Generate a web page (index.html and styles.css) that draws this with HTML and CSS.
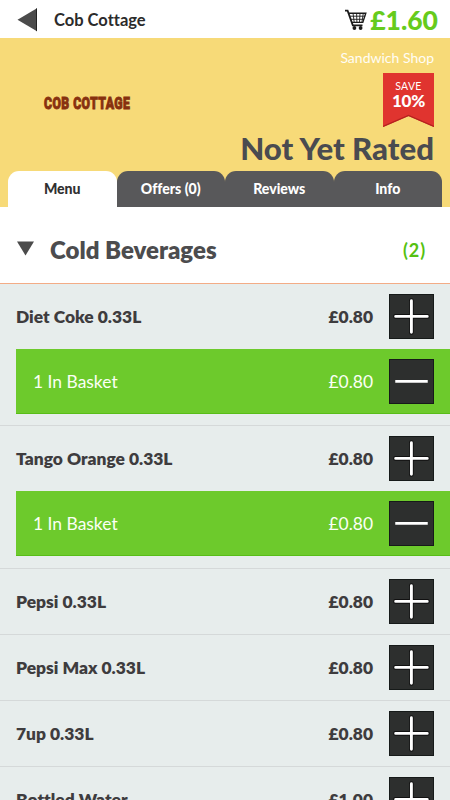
FILE: index.html
```html
<!DOCTYPE html>
<html lang="en">
<head>
<meta charset="utf-8">
<title>Cob Cottage</title>
<link rel="stylesheet" href="styles.css">
</head>
<body>
<svg class="defs" width="0" height="0" aria-hidden="true">
  <symbol id="plus" viewBox="0 0 45 45"><path d="M22.4 5.7v33.5M5.7 22.4h33.5" fill="none" stroke="#111" stroke-width="4.8" stroke-linecap="round"/><path d="M22.4 5.9v33.1M5.9 22.4h33.1" fill="none" stroke="#fff" stroke-width="3" stroke-linecap="round"/></symbol>
  <symbol id="minus" viewBox="0 0 45 45"><path d="M5.5 22.4h34" fill="none" stroke="#fff" stroke-width="3"/></symbol>
</svg>
<header class="topbar">
  <svg class="back" viewBox="0 0 20 24"><path d="M0.5 11.7 20 .3v23z" fill="#4b4b4b"/><path d="M19.5 .5v22.6" stroke="#222"/></svg>
  <span class="topbar-title">Cob Cottage</span>
  <svg class="cart" viewBox="0 0 24 22"><g fill="none" stroke="#1c1c1c" stroke-width="1.4"><path d="M1 1.7h2.6L8.8 16.3h9.7" stroke-width="1.8"/><path d="M4.6 4.2h17.2l-3 9.2H8"/><path d="M5.5 7.2h15.6M6.5 10.3h13.4M9 4.2l1.2 9M12.6 4.2l.3 9M16 4.2l-.5 9M19.3 4.2l-1.4 9" stroke-width=".9"/></g><circle cx="10.4" cy="19" r="1.9" fill="#1c1c1c"/><circle cx="16.6" cy="19" r="1.9" fill="#1c1c1c"/></svg>
  <span class="total">£1.60</span>
</header>
<section class="hero">
  <div class="logo">COB COTTAGE</div>
  <div class="info">
    <div class="kind">Sandwich Shop</div>
    <div class="ribbon"><svg class="ribbon-shape" viewBox="0 0 51 54"><path d="M0 0h51v54L25.5 43 0 54z" fill="#e0342f"/><path d="M0 53.4 25.5 42.4 51 53.4" fill="none" stroke="#b5221f" stroke-width="1.4"/></svg><span class="save">SAVE</span><span class="pct">10%</span></div>
    <div class="rating">Not Yet Rated</div>
  </div>
</section>
<nav class="tabs">
  <div class="tab active">Menu</div>
  <div class="tab">Offers (0)</div>
  <div class="tab">Reviews</div>
  <div class="tab">Info</div>
</nav>
<section class="category">
  <svg class="caret" viewBox="0 0 18 15"><path d="M0 0h18L9 15z" fill="#4b4b4b"/></svg>
  <h1>Cold Beverages</h1>
  <span class="count">(2)</span>
</section>
<main class="items">
  <div class="item in-basket">
    <div class="line"><span class="name">Diet Coke 0.33L</span><span class="price">£0.80</span><svg class="btn"><use href="#plus"/></svg></div>
    <div class="line basket"><span class="name">1 In Basket</span><span class="price">£0.80</span><svg class="btn"><use href="#minus"/></svg></div>
  </div>
  <div class="item in-basket">
    <div class="line"><span class="name">Tango Orange 0.33L</span><span class="price">£0.80</span><svg class="btn"><use href="#plus"/></svg></div>
    <div class="line basket"><span class="name">1 In Basket</span><span class="price">£0.80</span><svg class="btn"><use href="#minus"/></svg></div>
  </div>
  <div class="item"><div class="line"><span class="name">Pepsi 0.33L</span><span class="price">£0.80</span><svg class="btn"><use href="#plus"/></svg></div></div>
  <div class="item"><div class="line"><span class="name">Pepsi Max 0.33L</span><span class="price">£0.80</span><svg class="btn"><use href="#plus"/></svg></div></div>
  <div class="item"><div class="line"><span class="name">7up 0.33L</span><span class="price">£0.80</span><svg class="btn"><use href="#plus"/></svg></div></div>
  <div class="item"><div class="line"><span class="name">Bottled Water</span><span class="price">£1.00</span><svg class="btn"><use href="#plus"/></svg></div></div>
</main>
</body>
</html>
```
FILE: styles.css
```css
* { box-sizing: border-box; }
body {
  margin: 0;
  height: 800px;
  overflow: hidden;
  display: flex;
  flex-direction: column;
  font-family: Lato, "Liberation Sans", sans-serif;
  font-weight: 700;
  font-variant-ligatures: none;
  color: #3e3c3e;
  background: #fff;
}
body > * { flex: none; }
.defs { display: none; }

.topbar {
  height: 38px;
  display: flex;
  align-items: center;
  padding: 1px 12px 0 17px;
}
.back { width: 20px; height: 24px; }
.topbar-title { margin-left: 17px; font-size: 16.5px; color: #2b2b2b; }
.cart { width: 24px; height: 22px; margin: 1px 2px 0 auto; }
.total { font-size: 26.5px; line-height: 36px; font-weight: 900; color: #66cb1c; padding-top: 1px; }

.hero {
  height: 132.5px;
  display: flex;
  justify-content: space-between;
  padding: 0 16px 0 44px;
  background: #f7da78;
}
.logo {
  width: 88px;
  padding-top: 55px;
  font-family: Roboto, sans-serif;
  font-weight: 900;
  font-size: 17px;
  line-height: 20px;
  color: #87310f;
  white-space: nowrap;
  letter-spacing: .6px;
  -webkit-text-stroke: .9px #87310f;
  transform: scaleX(.72);
  transform-origin: left;
}
.info { display: flex; flex-direction: column; align-items: flex-end; }
.kind { margin-top: 11px; font-size: 14px; line-height: 18px; font-weight: 400; color: #fffdf5; }
.ribbon {
  position: relative;
  width: 51px;
  height: 54px;
  margin-top: 6px;
  padding-top: 7px;
  display: flex;
  flex-direction: column;
  align-items: center;
  color: #fff;
}
.ribbon-shape { position: absolute; inset: 0; width: 51px; height: 54px; }
.save, .pct { position: relative; }
.save { font-size: 10.5px; line-height: 13px; font-weight: 400; letter-spacing: .3px; }
.pct { font-size: 17px; line-height: 17px; font-weight: 900; margin-top: -1px; letter-spacing: -.2px; }
.rating { margin-top: 2px; font-size: 31.2px; line-height: 38px; font-weight: 900; color: #4a4b50; white-space: nowrap; }

.tabs {
  height: 36.5px;
  display: flex;
  padding: 0 8px;
  background: #f7da78;
}
.tab {
  flex: 1;
  border-radius: 11px 11px 0 0;
  background: #58585a;
  color: #fff;
  font-size: 14.1px;
  line-height: 36px;
  font-weight: 900;
  text-align: center;
}
.tab.active { background: #fff; color: #303030; }

.category {
  height: 77px;
  display: flex;
  align-items: center;
  padding: 10px 24px 0 16.5px;
  border-bottom: 1.5px solid #f3ac86;
}
.caret { width: 17px; height: 15px; margin-top: -3px; }
.category h1 { margin: 0 auto 0 16.5px; font-size: 24px; line-height: 30px; font-weight: 800; color: #4c4c4e; }
.count { font-size: 18px; letter-spacing: .9px; color: #55c110; }

.items { background: #e7edec; }
.item { border-bottom: 1px solid #d5d9d9; }
.in-basket { padding-bottom: 11.1px; }
.line {
  height: 65.2px;
  display: flex;
  align-items: center;
  padding: 0 16px;
  font-size: 17.4px;
  font-weight: 800;
}
.name { margin-right: auto; }
.price { margin-right: 16px; }
.btn { width: 45px; height: 45px; background: #2d2f2e; border: 1px solid #161a19; }
.basket {
  height: 65px;
  margin-left: 16px;
  padding-left: 17px;
  background: #6dca2c;
  color: #fbfff5;
  font-size: 17.45px;
  font-weight: 400;
  border-bottom: 1px solid #58bd18;
}
```
